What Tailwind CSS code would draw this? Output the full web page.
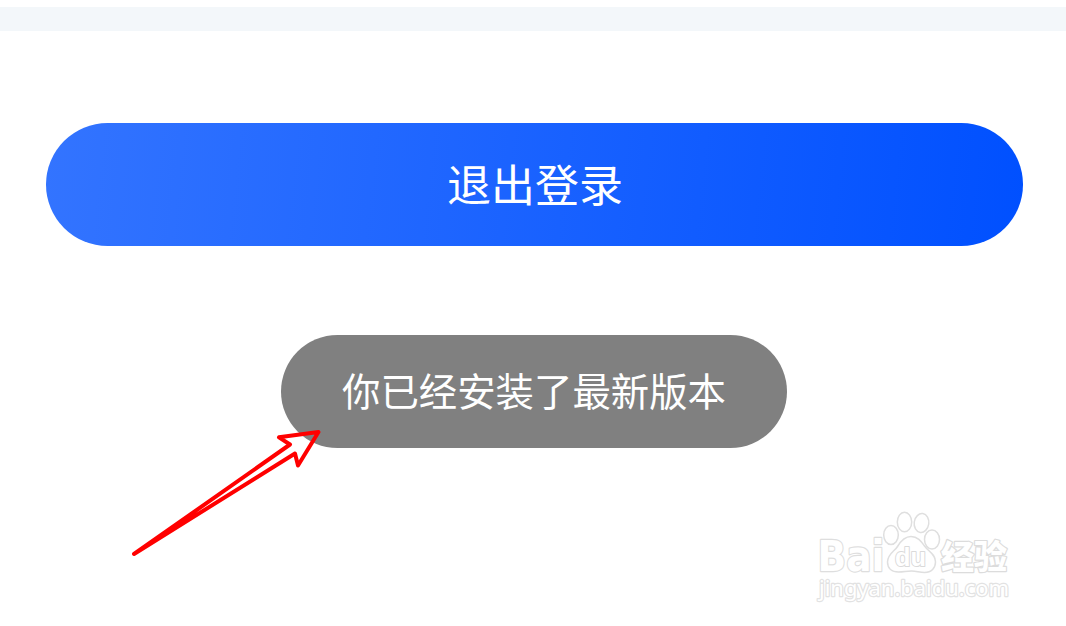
<!DOCTYPE html>
<html lang="zh-CN">
  <head>
    <meta charset="UTF-8" />
    <meta name="viewport" content="width=device-width, initial-scale=1.0" />
    <title>退出登录</title>
    <script src="https://cdn.jsdelivr.net/npm/@tailwindcss/browser@4"></script>
  </head>

  <body class="relative h-screen overflow-hidden bg-white pt-[7px] font-['Noto_Sans_CJK_SC',sans-serif] text-white">
    <div class="h-6 bg-[#f3f7fa]"></div>

    <main class="flex flex-col items-center pt-[92px] pl-[3px]">
      <button class="flex h-[123px] w-[977px] items-center justify-center rounded-full bg-[linear-gradient(96deg,#3374ff,#0050ff)] pb-[3px] pl-px text-[44px] leading-none">
        退出登录
      </button>
      <div class="mt-[89px] mr-[2px] flex h-[113px] w-[506px] items-center justify-center rounded-full bg-[#808080] pb-1 pl-px text-[38.4px] leading-none">
        你已经安装了最新版本
      </div>
    </main>

    <!-- Arrow pointing at the toast -->
    <svg class="absolute top-[420px] left-[120px]" width="220" height="145" viewBox="0 0 220 145" fill="none" stroke="#ff0000" stroke-width="4" stroke-linejoin="round" stroke-linecap="round">
      <path d="M14 134 170 24.500 159 17.300 198.500 12 178 45.500 175 33.500Z" />
    </svg>

    <!-- Watermark -->
    <svg class="absolute top-[500px] left-[800px]" width="230" height="115" viewBox="0 0 230 115" fill="#fff" stroke="#e2e2e2" stroke-width="2.400" stroke-linejoin="round" paint-order="stroke">
      <g stroke="#dfdfdf" stroke-width="1.500" paint-order="normal">
        <ellipse cx="91" cy="35" rx="7.300" ry="9.500" />
        <ellipse cx="104.500" cy="22" rx="7.200" ry="9.800" />
        <ellipse cx="121.500" cy="23" rx="7.300" ry="9.500" transform="rotate(8 121.500 23)" />
        <ellipse cx="132" cy="39.500" rx="7.500" ry="9.500" />
        <path d="M111 36.500c-6.500 0-10.500 5-13.500 10S87.500 54 87.500 62c0 6.500 4.500 10 11 10 5 0 8-1 13-1s8 1.500 13 1.500c7 0 11-4.500 11-10.500 0-8-7-10.500-11-16-3.500-5-7-9.500-13.500-9.500Z" />
      </g>
      <text x="17.500" y="71" font-family="DejaVu Sans, sans-serif" font-weight="700" font-size="43" stroke="#dedede" textLength="67" lengthAdjust="spacingAndGlyphs">Bai</text>
      <text x="95" y="66" font-family="Liberation Sans, sans-serif" font-weight="700" font-size="26" stroke="#dadada" stroke-width="2" textLength="31" lengthAdjust="spacingAndGlyphs">du</text>
      <text x="141" y="68.500" font-family="Noto Sans CJK SC, sans-serif" font-weight="900" font-size="32.500" stroke="#dcdcdc" textLength="66" lengthAdjust="spacingAndGlyphs">经验</text>
      <text x="19" y="96" font-family="Noto Sans, sans-serif" font-size="22" textLength="190" lengthAdjust="spacingAndGlyphs">jingyan.baidu.com</text>
    </svg>
  </body>
</html>
